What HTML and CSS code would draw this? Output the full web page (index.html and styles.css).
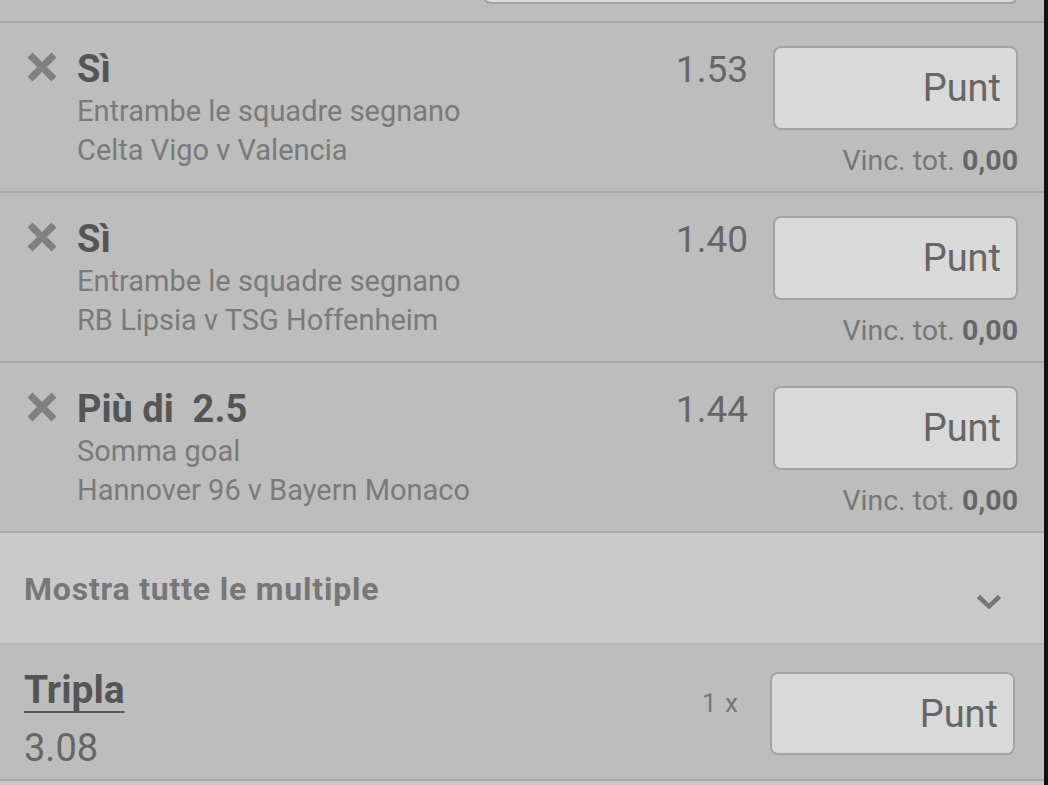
FILE: index.html
```html
<!DOCTYPE html>
<html lang="it">
<head>
  <meta charset="UTF-8" />
  <meta name="viewport" content="width=device-width, initial-scale=1.0"/>
  <title>Schedina</title>
  <link rel="stylesheet" href="styles.css">
</head>
<body>
  <div class="slip">
    <div class="slip-top">
      <div class="stake-wide"></div>
    </div>

    <div class="bet">
      <div class="bet-info">
        <svg class="remove" width="30" height="30" viewBox="0 0 30 30">
          <path d="M3 3 L27 27 M27 3 L3 27" stroke="#808080" stroke-width="7" fill="none"/>
        </svg>
        <div class="bet-text">
          <div class="bet-title">Sì</div>
          <div class="bet-sub">Entrambe le squadre segnano</div>
          <div class="bet-sub">Celta Vigo v Valencia</div>
        </div>
      </div>
      <div class="odds">1.53</div>
      <div class="stake-col">
        <div class="stake">Punt</div>
        <div class="returns">Vinc. tot. <b>0,00</b></div>
      </div>
    </div>

    <div class="bet">
      <div class="bet-info">
        <svg class="remove" width="30" height="30" viewBox="0 0 30 30">
          <path d="M3 3 L27 27 M27 3 L3 27" stroke="#808080" stroke-width="7" fill="none"/>
        </svg>
        <div class="bet-text">
          <div class="bet-title">Sì</div>
          <div class="bet-sub">Entrambe le squadre segnano</div>
          <div class="bet-sub">RB Lipsia v TSG Hoffenheim</div>
        </div>
      </div>
      <div class="odds">1.40</div>
      <div class="stake-col">
        <div class="stake">Punt</div>
        <div class="returns">Vinc. tot. <b>0,00</b></div>
      </div>
    </div>

    <div class="bet">
      <div class="bet-info">
        <svg class="remove" width="30" height="30" viewBox="0 0 30 30">
          <path d="M3 3 L27 27 M27 3 L3 27" stroke="#808080" stroke-width="7" fill="none"/>
        </svg>
        <div class="bet-text">
          <div class="bet-title">Più di&nbsp; 2.5</div>
          <div class="bet-sub">Somma goal</div>
          <div class="bet-sub">Hannover 96 v Bayern Monaco</div>
        </div>
      </div>
      <div class="odds">1.44</div>
      <div class="stake-col">
        <div class="stake">Punt</div>
        <div class="returns">Vinc. tot. <b>0,00</b></div>
      </div>
    </div>

    <div class="multiples">
      <span class="multiples-label">Mostra tutte le multiple</span>
      <svg class="chevron" width="26" height="16" viewBox="0 0 26 16">
        <path d="M2.5 2.5 L13 12.5 L23.5 2.5" stroke="#777" stroke-width="4.5" fill="none"/>
      </svg>
    </div>

    <div class="multi">
      <div class="multi-info">
        <div class="multi-title">Tripla</div>
        <div class="multi-odds">3.08</div>
      </div>
      <div class="multi-count">1 x</div>
      <div class="stake multi-stake">Punt</div>
    </div>
  </div>
</body>
</html>
```

FILE: styles.css
```css
* {
  box-sizing: border-box;
}

body {
  margin: 0;
  background: #111;
  font-family: 'Roboto', 'Liberation Sans', sans-serif;
}

.slip {
  width: 1044px;
  min-height: 100vh;
  background: #c8c8c8;
}

.slip-top {
  height: 23px;
  background: #bdbdbd;
  border-bottom: 2px solid #a9a9a9;
  overflow: hidden;
  display: flex;
  justify-content: flex-end;
  align-items: flex-end;
  padding-right: 26px;
}

.stake-wide {
  width: 535px;
  height: 40px;
  margin-bottom: 17px;
  background: #d9d9d9;
  border: 2px solid #a3a3a3;
  border-radius: 8px;
}

.bet {
  display: flex;
  align-items: flex-start;
  height: 170px;
  padding: 23px 26px 0 27px;
  background: #bdbdbd;
  border-bottom: 2px solid #a9a9a9;
}

.bet-info {
  flex: 1;
  display: flex;
  align-items: flex-start;
  gap: 20px;
  margin-top: 3px;
}

.remove {
  flex: none;
  margin-top: 3px;
}

.bet-title {
  font-size: 38px;
  line-height: 41px;
  font-weight: 700;
  color: #555;
  margin-bottom: 2px;
  white-space: pre;
}

.bet-sub {
  font-size: 29px;
  line-height: 39px;
  color: #7a7a7a;
}

.odds {
  font-size: 37px;
  line-height: 41px;
  color: #666;
  margin-top: 3px;
  margin-right: 25px;
}

.stake-col {
  display: flex;
  flex-direction: column;
  align-items: flex-end;
}

.stake {
  width: 245px;
  height: 84px;
  display: flex;
  align-items: center;
  justify-content: flex-end;
  padding-right: 15px;
  background: #d9d9d9;
  border: 2px solid #a3a3a3;
  border-radius: 8px;
  font-size: 38px;
  line-height: 38px;
  color: #666;
}

.returns {
  margin-top: 15px;
  font-size: 28.5px;
  line-height: 32px;
  color: #777;
}

.returns b {
  color: #666;
}

.multiples {
  height: 112px;
  display: flex;
  justify-content: space-between;
  align-items: flex-start;
  padding: 40px 42px 0 24px;
  background: #c9c9c9;
  border-bottom: 2px solid #b3b3b3;
}

.multiples-label {
  font-size: 32px;
  line-height: 32px;
  font-weight: 700;
  letter-spacing: 0.8px;
  color: #777;
}

.chevron {
  margin-top: 21px;
}

.multi {
  height: 136px;
  display: flex;
  align-items: flex-start;
  padding: 23px 29px 0 24px;
  background: #bdbdbd;
  border-bottom: 2px solid #a9a9a9;
}

.multi-info {
  flex: 1;
}

.multi-title {
  display: inline-block;
  font-size: 39px;
  line-height: 44px;
  font-weight: 700;
  color: #555;
  text-decoration: underline;
  text-decoration-thickness: 2px;
  text-underline-offset: 8px;
  text-decoration-skip-ink: none;
}

.multi-odds {
  margin-top: 16px;
  font-size: 38px;
  line-height: 40px;
  color: #666;
}

.multi-count {
  margin-top: 21px;
  margin-right: 32px;
  font-size: 26px;
  line-height: 28px;
  word-spacing: 2px;
  color: #777;
}

.multi-stake {
  margin-top: 4px;
  height: 83px;
}
```
